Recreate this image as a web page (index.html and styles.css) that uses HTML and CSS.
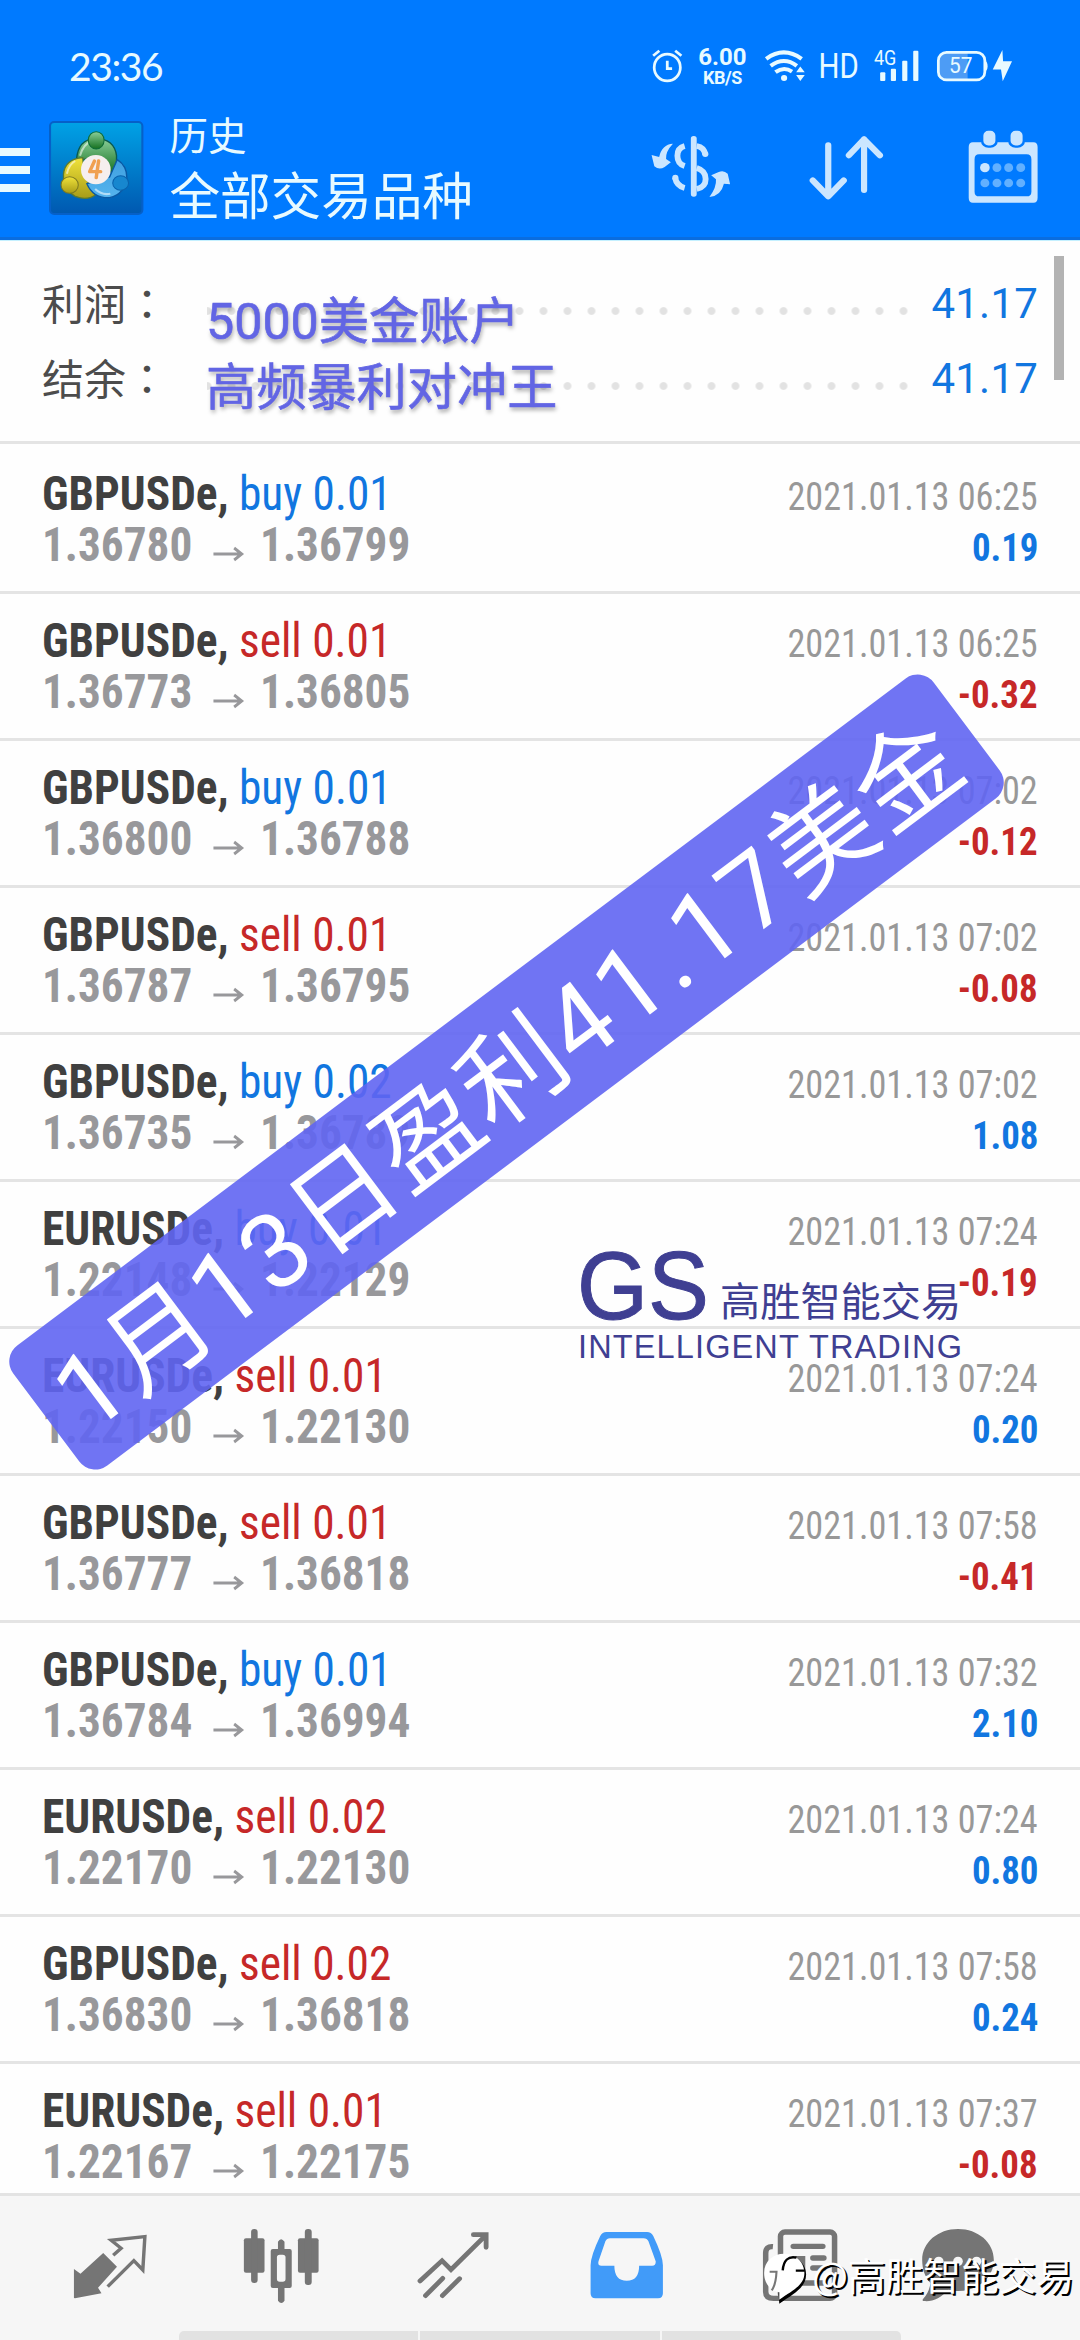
FILE: index.html
```html
<!DOCTYPE html>
<html lang="zh-CN">
<head>
<meta charset="utf-8">
<title>历史</title>
<link rel="stylesheet" href="styles.css">
</head>
<body>
<div class="screen">
  <header class="header">
    <div class="status">
      <span class="clock">23:36</span>
      <div class="status-icons">
        <svg class="ic-alarm" viewBox="310 130 120 128" preserveAspectRatio="none" fill="none" stroke="#e8faff" stroke-width="8"><ellipse cx="366" cy="203" rx="38" ry="40"/><path d="M366 183v23h14" /><path d="M325 168l18-15M407 168l-18-15"/></svg>
        <div class="speed"><b class="speed-num">6.00</b><b class="speed-unit">KB/S</b></div>
        <svg class="ic-wifi" viewBox="640 130 150 128" preserveAspectRatio="none" fill="none" stroke="#e8faff" stroke-width="12"><path d="M655 177q51-38 103 0M668 198q39-29 76 0M682 217q24-18 48-2"/><circle cx="707" cy="234" r="9" fill="#e8faff" stroke="none"/><path d="M742 217l12-17 13 17zM742 225l12 18 13-18z" fill="#e8faff" stroke="none"/></svg>
        <svg class="ic-hd" viewBox="790 130 150 128" preserveAspectRatio="none"><text x="806" y="235" font-size="103" textLength="117" lengthAdjust="spacingAndGlyphs">HD</text></svg>
        <svg class="ic-signal" viewBox="940 130 180 128" preserveAspectRatio="none" fill="#e8faff"><text x="966" y="196" font-size="59" textLength="65" lengthAdjust="spacingAndGlyphs">4G</text><rect x="984" y="217" width="15" height="26" rx="3"/><rect x="1015" y="207" width="15" height="36" rx="3"/><rect x="1048" y="183" width="15" height="60" rx="3"/><rect x="1080" y="153" width="15" height="90" rx="3"/></svg>
        <svg class="ic-battery" viewBox="1120 130 260 128" preserveAspectRatio="none" fill="#e8faff"><path d="M1176 160h62v78h-62q-21 0-21-21v-36q0-21 21-21z" fill="#4d9cf5"/><rect x="1153" y="158" width="135" height="82" rx="24" fill="none" stroke="#e8faff" stroke-width="8"/><path d="M1288 182q8 4 8 17t-8 17z"/><text x="1184" y="220" font-size="66" textLength="68" lengthAdjust="spacingAndGlyphs">57</text><path d="M1339 151l-28 58h24l5 35 27-60h-26z"/></svg>
      </div>
    </div>
    <div class="toolbar">
      <svg class="ic-menu" viewBox="0 0 30 44" fill="#e8faff"><path d="M0 0h30v8H0zM0 18h30v8H0zM0 36h30v8H0z"/></svg>
      <svg class="logo" viewBox="142 362 274 282" preserveAspectRatio="none">
        <defs>
          <linearGradient id="sky" x1="0" y1="0" x2="0" y2="1"><stop offset="0" stop-color="#00a2e6"/><stop offset="1" stop-color="#0058b0"/></linearGradient>
          <linearGradient id="green" x1="0" y1="0" x2="0" y2="1"><stop offset="0" stop-color="#8bcf9a"/><stop offset="1" stop-color="#14701f"/></linearGradient>
          <linearGradient id="yellow" x1="0" y1="0" x2="0" y2="1"><stop offset="0" stop-color="#f0e23a"/><stop offset="1" stop-color="#a89c18"/></linearGradient>
          <linearGradient id="blue" x1="0" y1="0" x2="0" y2="1"><stop offset="0" stop-color="#3fa0e0"/><stop offset="1" stop-color="#55b4ee"/></linearGradient>
        </defs>
        <rect x="145" y="365" width="268" height="276" rx="12" fill="url(#sky)" stroke="#0660c8" stroke-width="6"/>
        <path d="M222 478q4-62 56-64 54 2 60 52 2 34-12 54l-48-44z" fill="url(#green)" stroke="#0a5a50" stroke-width="4"/>
        <path d="M240 472q-52 4-56 50-2 44 34 66 34 14 58-4l-32-60z" fill="url(#yellow)" stroke="#5b7a30" stroke-width="4"/>
        <path d="M340 478q28 18 28 54-6 50-50 60-48 2-66-42l66-20z" fill="url(#blue)" stroke="#0a59a4" stroke-width="4"/>
        <path d="M232 466q10-36 32-42M194 520q6-28 24-38M276 566q20 20 44 14" fill="none" stroke="#fff" stroke-opacity=".55" stroke-width="6"/>
        <ellipse cx="279" cy="420" rx="23" ry="26" fill="url(#green)" stroke="#0d6c38" stroke-width="3"/>
        <ellipse cx="202" cy="554" rx="25" ry="25" fill="url(#yellow)" stroke="#7d7a20" stroke-width="3"/>
        <ellipse cx="350" cy="548" rx="23" ry="22" fill="#1787cf" stroke="#0a62ad" stroke-width="3"/>
        <ellipse cx="278" cy="508" rx="43" ry="44" fill="#f6efee"/>
        <path d="M274 482l-14 32h32M286 482l-7 50" fill="none" stroke="#f0a050" stroke-width="10" stroke-linecap="round" stroke-linejoin="round"/>
      </svg>
      <div class="titles"><span class="title">历史</span><span class="subtitle">全部交易品种</span></div>
      <div class="actions">
        <svg class="ic-act" viewBox="300 380 270 240" preserveAspectRatio="none" fill="#cbe6ff"><rect x="436" y="407" width="17" height="182" rx="8"/><path d="M418 437q-21 6-21 29 0 24 21 31M390 532q5 25 28 31M453 437q22 4 25 26M453 503q26 8 26 33 0 24-26 30" fill="none" stroke="#cbe6ff" stroke-width="17"/><circle cx="478" cy="461" r="9"/><circle cx="391" cy="532" r="9"/><path d="M384 430q-32 2-40 40l-22-6 8 34q14 12 30 2l18-14-14-10q-2-22 20-46zM490 590q34-4 42-40l18 2-7-32q-12-12-26-5l-22 10 14 12q2 24-19 53z"/></svg>
        <svg class="ic-act" viewBox="755 380 270 240" preserveAspectRatio="none" fill="none" stroke="#cbe6ff" stroke-width="18" stroke-linecap="round" stroke-linejoin="round"><path d="M837 435v152M792 540l45 48 45-48M941 569V417M897 465l44-48 46 48"/></svg>
        <svg class="ic-act" viewBox="1210 380 270 240" preserveAspectRatio="none" fill="#cbe6ff"><path fill-rule="evenodd" d="M1256 426h176q12 0 12 14v152q0 15-12 15h-176q-12 0-12-15V440q0-14 12-14zM1274 462q-13 0-13 15v97q0 14 13 14h138q14 0 14-14v-97q0-15-14-15z"/><g stroke="#007aff" stroke-width="7"><rect x="1283" y="388" width="42" height="51" rx="18"/><rect x="1362" y="388" width="42" height="51" rx="18"/></g><circle cx="1291" cy="502" r="14"/><g fill="#62b0ff"><circle cx="1326" cy="502" r="13"/><circle cx="1360" cy="502" r="13"/><circle cx="1395" cy="502" r="13"/><circle cx="1291" cy="548" r="13"/><circle cx="1326" cy="548" r="13"/><circle cx="1360" cy="548" r="13"/><circle cx="1395" cy="548" r="13"/></g></svg>
      </div>
    </div>
  </header>

  <section class="summary">
    <div class="sum-row"><span class="sum-label">利润<i lang="zh-TW">：</i></span><span class="dots"></span><span class="sum-value">41.17</span></div>
    <div class="sum-row"><span class="sum-label">结余<i lang="zh-TW">：</i></span><span class="dots"></span><span class="sum-value">41.17</span></div>
  </section>

  <main class="deals" id="deals"></main>

  <nav class="nav">
    <div class="tabs">
      <svg class="tab" viewBox="70 420 500 270" preserveAspectRatio="none" fill="#757575"><path d="M300 519l40 41-55 63 10 17-77 15q-4 0-3-5v-83l19 14z"/><path d="M329 526l23-21-29-24 98-11-6 100-26-28-76 78" fill="none" stroke="#757575" stroke-width="10"/></svg>
      <svg class="tab" viewBox="570 420 500 270" preserveAspectRatio="none" fill="#757575"><rect x="709" y="475" width="60" height="103" rx="6"/><rect x="730" y="447" width="19" height="162" rx="9"/><rect x="866" y="475" width="60" height="103" rx="6"/><rect x="886" y="447" width="20" height="168" rx="9"/><path fill-rule="evenodd" d="M793 507h15v-22q9-15 19 0v22h15q6 0 6 6v105q0 6-6 6h-15v38q-9 14-19 0v-38h-15q-6 0-6-6V513q0-6 6-6zm20 17q-8 0-8 8v65q0 8 8 8h9q8 0 8-8v-65q0-8-8-8z"/></svg>
      <svg class="tab" viewBox="1070 420 500 270" preserveAspectRatio="none" fill="none" stroke="#757575" stroke-width="14" stroke-linecap="round"><path d="M1221 603l64-61 26 27 100-102M1376 464h37v38M1237 647l50-52M1286 647l50-51"/></svg>
      <svg class="tab" viewBox="2 420 500 270" preserveAspectRatio="none" fill="#419bf9"><path fill-rule="evenodd" d="M192 456h118q12 0 18 12 28 60 28 88v84q0 15-14 15H160q-14 0-14-15v-84q0-28 28-88 6-12 18-12zm10 19q-9 0-13 9l-20 60q-3 13 8 13h38q0 45 36 45t36-45h38q11 0 10-13l-21-60q-4-9-14-9z"/></svg>
      <svg class="tab" viewBox="502 420 500 270" preserveAspectRatio="none" fill="none" stroke="#757575" stroke-width="16"><rect x="698" y="456" width="157" height="199" rx="13"/><path d="M676 500q-21-2-21 20v115q0 20 23 20h30"/><path d="M735 499h86M792 534h32M792 564h32M735 609h86" stroke-linecap="round"/><rect x="735" y="536" width="27" height="32"/></svg>
      <svg class="tab" viewBox="1002 420 500 270" preserveAspectRatio="none" fill="#757575"><path d="M1214 447c58 0 104 40 104 93s-46 93-104 93c-9 0-21-1-29-4-18 24-46 37-70 34-5-1-5-4-2-7q17-18 21-47c-16-18-24-42-24-69 0-53 46-93 104-93z"/><g fill="#f6f6f6"><circle cx="1158" cy="544" r="14"/><circle cx="1214" cy="544" r="14"/><circle cx="1268" cy="544" r="14"/></g></svg>
    </div>
    <div class="gesture"><span></span><span></span><span></span></div>
  </nav>

  <div class="scrollbar"></div>
  <div class="promo">5000美金账户<br>高频暴利对冲王</div>
  <div class="banner"><span><i>1</i>月<i>13</i>日盈利<i>41.17</i>美金</span></div>
  <div class="brand">
    <div class="brand-top"><svg class="gs" viewBox="0 0 128 80"><text x="-3" y="74" font-size="97" textLength="132" lengthAdjust="spacingAndGlyphs">GS</text></svg><span>高胜智能交易</span></div>
    <svg class="brand-sub" viewBox="0 0 384 32"><text x="-2" y="27" font-size="32.5" textLength="384">INTELLIGENT TRADING</text></svg>
  </div>
  <div class="credit">
    <svg viewBox="640 520 140 165" preserveAspectRatio="none"><path d="M714 534c34 0 60 24 60 56 0 38-32 56-78 88l-2-30z" fill="#000"/><path d="M710 528c34 0 59 26 59 58 0 36-31 50-73 80v-22c-28-6-44-28-44-58 0-36 26-58 58-58z" fill="#fff"/><path d="M746 540q-36-8-40 38M744 579h26" fill="none" stroke="#000" stroke-width="7"/><path d="M668 582h20q-2 40-14 56" fill="none" stroke="#777" stroke-width="6"/></svg>
    <span>@高胜智能交易</span>
  </div>
</div>
<script src="deals.js"></script>
</body>
</html>
```
FILE: deals.js
```js
const deals = [
  ["GBPUSDe", "buy", "0.01", "1.36780", "1.36799", "06:25", "0.19"],
  ["GBPUSDe", "sell", "0.01", "1.36773", "1.36805", "06:25", "-0.32"],
  ["GBPUSDe", "buy", "0.01", "1.36800", "1.36788", "07:02", "-0.12"],
  ["GBPUSDe", "sell", "0.01", "1.36787", "1.36795", "07:02", "-0.08"],
  ["GBPUSDe", "buy", "0.02", "1.36735", "1.36789", "07:02", "1.08"],
  ["EURUSDe", "buy", "0.01", "1.22148", "1.22129", "07:24", "-0.19"],
  ["EURUSDe", "sell", "0.01", "1.22150", "1.22130", "07:24", "0.20"],
  ["GBPUSDe", "sell", "0.01", "1.36777", "1.36818", "07:58", "-0.41"],
  ["GBPUSDe", "buy", "0.01", "1.36784", "1.36994", "07:32", "2.10"],
  ["EURUSDe", "sell", "0.02", "1.22170", "1.22130", "07:24", "0.80"],
  ["GBPUSDe", "sell", "0.02", "1.36830", "1.36818", "07:58", "0.24"],
  ["EURUSDe", "sell", "0.01", "1.22167", "1.22175", "07:37", "-0.08"]
];
const arrow = '<svg class="arrow" viewBox="0 0 32 14" fill="none" stroke="#98989b" stroke-width="3"><path d="M0 7h30M22 1l8 6-8 6"/></svg>';
document.getElementById("deals").innerHTML = deals.map(([sym, side, vol, from, to, time, pl]) => `
  <article class="deal">
    <div class="line"><span class="name"><b>${sym},</b> <span class="${side}">${side} ${vol}</span></span><span class="date">2021.01.13 ${time}</span></div>
    <div class="line"><span class="prices"><b>${from}</b>${arrow}<b>${to}</b></span><b class="pl ${pl[0] === "-" ? "sell" : "buy"}">${pl}</b></div>
  </article>`).join("");
```
FILE: styles.css
```css
* { box-sizing: border-box; }
body { margin: 0; background: #fff; font-family: Roboto, "Noto Sans CJK SC", sans-serif; }
svg { display: block; flex: none; overflow: visible; }
svg text { font-family: Roboto, sans-serif; fill: #e8faff; }
.screen { position: relative; width: 1080px; height: 2340px; overflow: hidden; display: flex; flex-direction: column; background: #fefefe; }

.header { height: 241px; flex: none; background: #007aff; border-bottom: 1px solid #c4f0ff; box-shadow: inset 0 -3px 0 #0a6ddf; color: #e8faff; }
.status { display: flex; justify-content: space-between; padding: 43px 64px 0 69px; height: 86px; }
.clock { font: 39px/46px Lato, sans-serif; letter-spacing: -1.4px; }
.status-icons { display: flex; height: 43px; }
.ic-alarm { width: 41.3px; height: 43px; }
.speed { width: 72.3px; display: flex; flex-direction: column; align-items: center; padding: 4px 5px 0 0; }
.speed-num { font-size: 24px; line-height: 21px; }
.speed-unit { font-size: 18px; line-height: 19px; letter-spacing: -.4px; }
.ic-wifi, .ic-hd { width: 51.7px; height: 43px; }
.ic-signal { width: 62px; height: 43px; }
.ic-battery { width: 89.5px; height: 43px; }

.toolbar { display: flex; height: 154px; padding-right: 30px; }
.ic-menu { width: 30px; height: 44px; margin: 62px 19px 0 0; }
.logo { width: 94.4px; height: 94px; margin-top: 34.5px; }
.titles { display: flex; flex-direction: column; margin-left: 26px; padding-top: 28px; }
.title { font-size: 38.5px; line-height: 46px; }
.subtitle { font-size: 50.6px; line-height: 76px; }
.actions { display: flex; margin: 40.7px 0 0 auto; gap: 63.7px; }
.ic-act { width: 93px; height: 80px; }

.summary { height: 203px; flex: none; border-bottom: 3px solid #e4e4e4; padding: 25px 42px 0 42px; }
.sum-row { display: flex; height: 75px; align-items: center; }
.sum-label { font-size: 42px; width: 165px; color: #4c4c4c; white-space: nowrap; padding-bottom: 4px; }
.sum-label i { font-style: normal; font-family: "Noto Sans CJK TC", sans-serif; }
.dots { flex: 1; height: 8px; margin: 15px 16px 0 0; background: radial-gradient(circle at 12px 4px, #e2e2e2 3.4px, transparent 4.4px) right top / 24px 8px repeat-x; }
.sum-value { font-size: 42px; color: #1176e0; letter-spacing: .2px; }

.deals { flex: 1; overflow: hidden; }
.deal { height: 147px; padding: 21px 42px 0 42px; border-bottom: 3px solid #e4e4e4; font-family: "Roboto Condensed", Roboto, sans-serif; font-stretch: 75%; font-size: 48px; line-height: 51px; }
.deal:first-child { height: 150px; padding-top: 24px; }
.line { display: flex; justify-content: space-between; align-items: baseline; height: 51px; }
.name { color: #404040; white-space: nowrap; transform: scaleX(.945); transform-origin: left; }
.prices { display: flex; align-items: baseline; color: #98989b; transform: scaleX(.942); transform-origin: left; }
.arrow { width: 32px; height: 14px; margin: 0 18px 3px 22px; }
.date { color: #989898; font-size: 39px; transform: scaleX(.928); transform-origin: right; }
.pl { font-size: 39px; transform: scaleX(.945); transform-origin: right; }
.name .buy, .pl.buy { color: #1176e0; }
.name .sell, .pl.sell { color: #c62828; }

.nav { height: 147px; flex: none; background: #f6f6f6; border-top: 3px solid #e3e3e3; display: flex; flex-direction: column; justify-content: space-between; }
.tabs { display: flex; padding: 24px 0 0 24px; }
.tab { width: 172.2px; height: 90px; }
.gesture { display: flex; gap: 2px; width: 722px; height: 9px; margin-left: 179px; border-radius: 5px 5px 0 0; overflow: hidden; }
.gesture span { flex: 1; background: #e2e2e2; }

.scrollbar { position: absolute; left: 1054px; top: 256px; width: 10px; height: 124px; background: #b3b3b3; }
.promo { position: absolute; left: 206px; top: 288.5px; font: 50.2px/66.5px Roboto, "Noto Sans CJK SC", sans-serif; -webkit-text-stroke: .6px #6265e4; color: #6265e4; white-space: nowrap; text-shadow: 1px 3px 4px rgba(0,0,0,.35); }
.banner { position: absolute; left: -69.5px; top: 996.5px; width: 1151px; height: 150px; border-radius: 20px; transform: rotate(-36.9deg); background: rgba(97,101,242,.9); color: #fff; display: flex; align-items: center; justify-content: center; font: 104px/150px "Noto Sans CJK SC", sans-serif; letter-spacing: 2px; white-space: nowrap; }
.banner i { font-style: normal; font-family: Roboto, sans-serif; letter-spacing: 4px; }
.brand { position: absolute; left: 580px; top: 1245px; color: #3f3f92; }
.brand svg text { fill: #3f3f92; font-family: "Liberation Sans", Arial, sans-serif; }
.brand-top { display: flex; align-items: flex-end; font: 40.2px/53px "Noto Sans CJK SC", sans-serif; gap: 12px; white-space: nowrap; }
.gs { width: 128px; height: 80px; }
.brand .gs text { stroke: #3f3f92; stroke-width: 1px; }
.brand-sub { width: 384px; height: 32px; margin-top: 6px; }
.credit { position: absolute; left: 760px; top: 2251px; display: flex; color: #fff; font: 37.7px/46px "Noto Sans CJK SC", sans-serif; text-shadow: 2px 2px 0 #000; white-space: nowrap; }
.credit svg { width: 48.2px; height: 55px; margin-right: 4px; }
```
